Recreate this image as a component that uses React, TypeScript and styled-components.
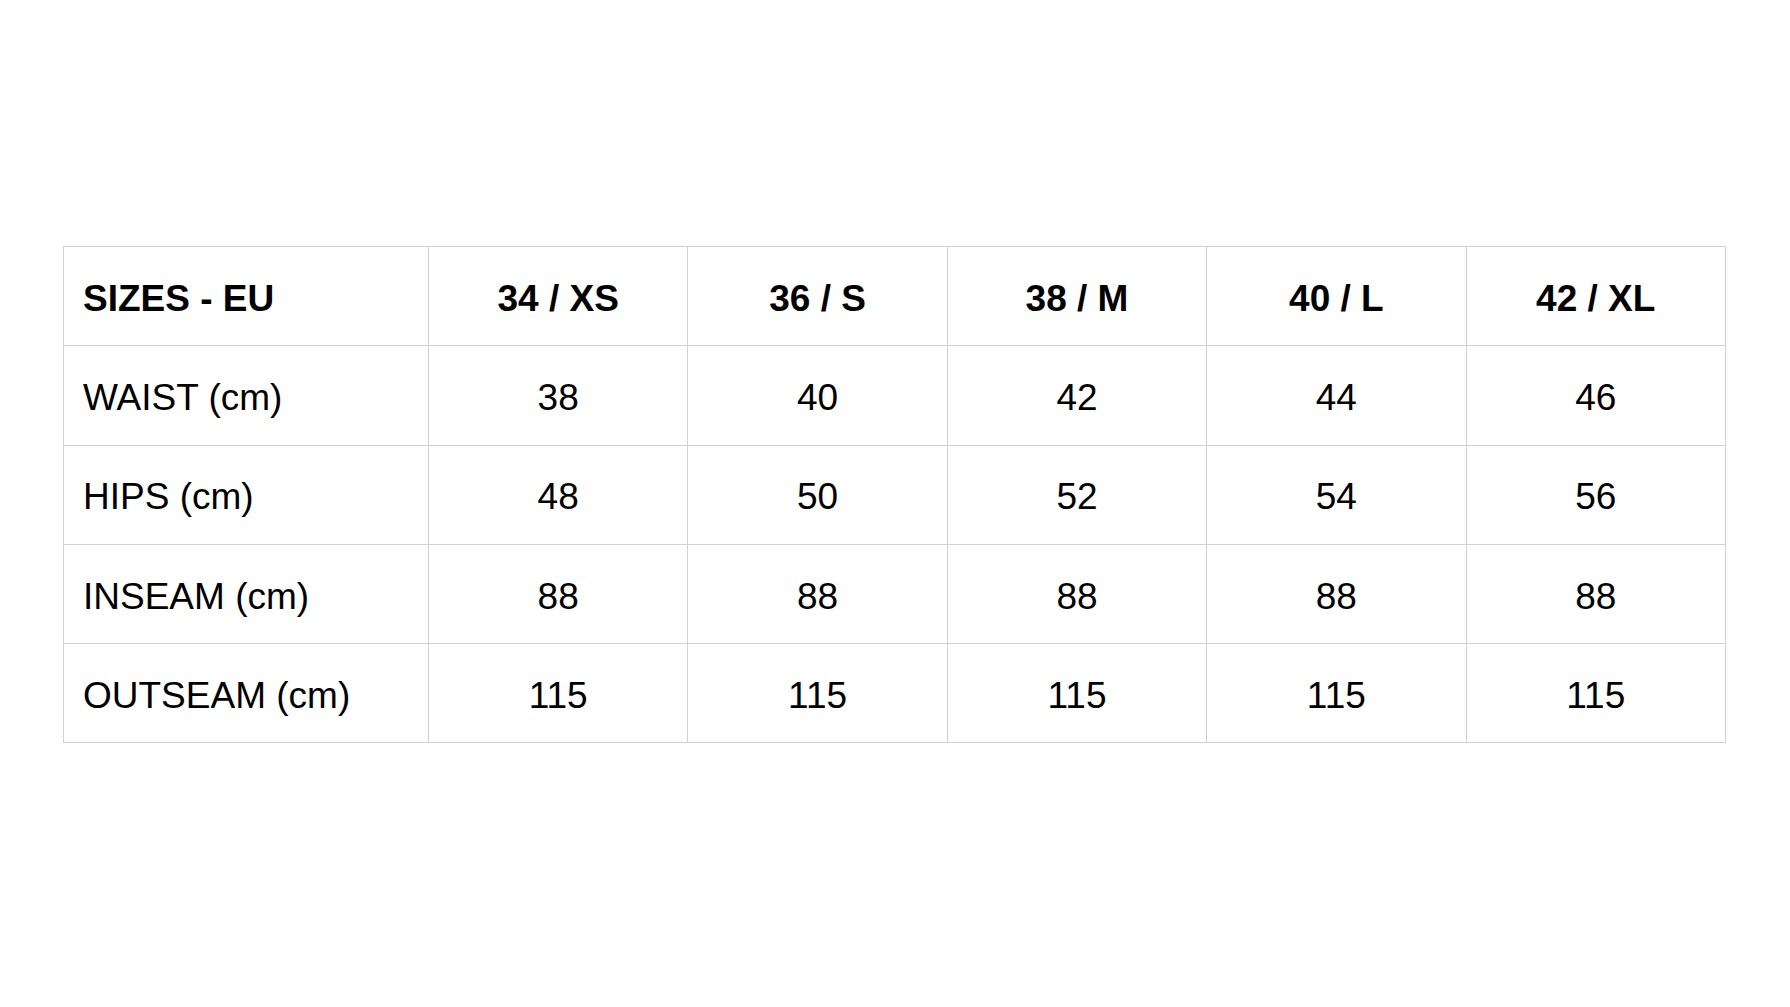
import styled, { createGlobalStyle } from "styled-components";

const sizes = ["34 / XS", "36 / S", "38 / M", "40 / L", "42 / XL"];

const rows = [
  { label: "WAIST (cm)", values: [38, 40, 42, 44, 46] },
  { label: "HIPS (cm)", values: [48, 50, 52, 54, 56] },
  { label: "INSEAM (cm)", values: [88, 88, 88, 88, 88] },
  { label: "OUTSEAM (cm)", values: [115, 115, 115, 115, 115] },
];

const GlobalStyle = createGlobalStyle`
  *, *::before, *::after {
    margin: 0;
    padding: 0;
    box-sizing: border-box;
  }

  html, body {
    width: 100%;
    height: 100%;
    background: #fff;
    font-family: "Liberation Sans", Arial, sans-serif;
    -webkit-font-smoothing: antialiased;
  }
`;

const Page = styled.div`
  min-height: 100vh;
  padding: 246px 65px 0 63px;
`;

const Table = styled.table`
  width: 1662px;
  border-collapse: collapse;
  table-layout: fixed;
  color: #000;
  font-size: 37px;
`;

const Col = styled.col<{ $w: number }>`
  width: ${(p) => p.$w}px;
`;

const Cell = styled.td<{ $label?: boolean; $head?: boolean }>`
  height: 99.3px;
  border: 1px solid #d2d2d2;
  padding: 4px 0 0 ${(p) => (p.$label ? 19 : 0)}px;
  text-align: ${(p) => (p.$label ? "left" : "center")};
  vertical-align: middle;
  font-weight: ${(p) => (p.$head ? 700 : 400)};
  line-height: 1;
  white-space: nowrap;
`;

export default function App() {
  return (
    <>
      <GlobalStyle />
      <Page>
        <Table>
          <colgroup>
            <Col $w={365} />
            {sizes.map((s) => (
              <Col key={s} $w={259.4} />
            ))}
          </colgroup>
          <thead>
            <tr>
              <Cell as="th" $label $head>
                SIZES - EU
              </Cell>
              {sizes.map((s) => (
                <Cell as="th" key={s} $head>
                  {s}
                </Cell>
              ))}
            </tr>
          </thead>
          <tbody>
            {rows.map((r) => (
              <tr key={r.label}>
                <Cell $label>{r.label}</Cell>
                {r.values.map((v, i) => (
                  <Cell key={i}>{v}</Cell>
                ))}
              </tr>
            ))}
          </tbody>
        </Table>
      </Page>
    </>
  );
}
